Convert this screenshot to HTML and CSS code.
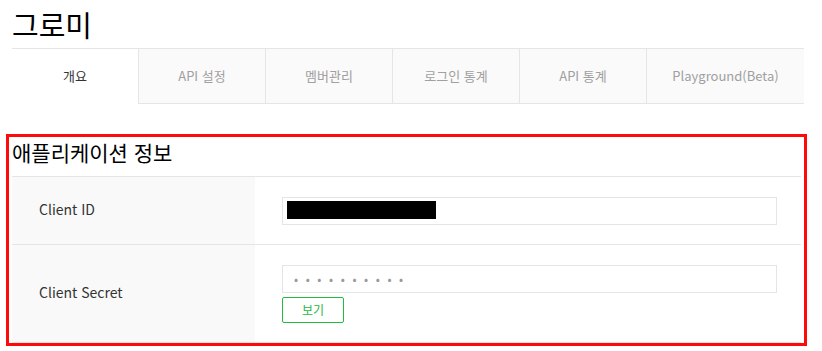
FILE: index.html
```html
<!DOCTYPE html>
<html lang="ko">
<head>
  <meta charset="UTF-8" />
  <meta name="viewport" content="width=device-width, initial-scale=1.0" />
  <title>그로미 - 개요</title>
  <link rel="stylesheet" href="styles.css">
</head>
<body>

  <div class="page">
    <h1 class="app-title">그로미</h1>

    <ul class="tabs">
      <li class="tab active">개요</li>
      <li class="tab">API 설정</li>
      <li class="tab">멤버관리</li>
      <li class="tab">로그인 통계</li>
      <li class="tab">API 통계</li>
      <li class="tab last">Playground(Beta)</li>
    </ul>
  </div>

  <div class="section">
    <h2 class="section-title">애플리케이션 정보</h2>
    <table class="info">
      <tr class="row-id">
        <th>Client ID</th>
        <td>
          <div class="field"><span class="masked"></span></div>
        </td>
      </tr>
      <tr class="row-secret">
        <th>Client Secret</th>
        <td>
          <div class="field"><span class="dots">••••••••••</span></div>
          <button class="btn-show" type="button">보기</button>
        </td>
      </tr>
    </table>
  </div>

</body>
</html>
```

FILE: styles.css
```css
body {
  margin: 0;
  background-color: #fff;
  color: #333;
  font-family: "Noto Sans CJK KR", "Noto Sans", sans-serif;
}
.page {
  width: 792px;
  margin-left: 12px;
}
.app-title {
  margin: 0;
  padding-top: 4px;
  height: 44px;
  line-height: 40px;
  font-size: 29px;
  font-weight: normal;
  color: #000;
}
.tabs {
  display: flex;
  list-style: none;
  margin: 0;
  padding: 0;
  border-top: 1px solid #e5e5e5;
}
.tab {
  width: 127px;
  height: 55px;
  line-height: 54px;
  text-align: center;
  font-size: 13px;
  color: #a0a0a0;
  background-color: #fafafa;
  border-left: 1px solid #e5e5e5;
  border-bottom: 1px solid #e5e5e5;
  box-sizing: border-box;
}
.tab.active {
  width: 126px;
  color: #333;
  background-color: #fff;
  border-left: none;
  border-bottom-color: #fff;
}
.tab.last {
  flex: 1;
}
.section {
  width: 792px;
  margin: 30px 0 0 6px;
  padding-left: 3px;
  border: 3px solid #ff0a0a;
}
.section-title {
  margin: 0;
  padding: 1px 0 10px;
  line-height: 28px;
  font-size: 21px;
  font-weight: normal;
  color: #000;
}
.info {
  width: 789px;
  border-collapse: collapse;
  border-top: 1px solid #e5e5e5;
}
.info th,
.info td {
  border-bottom: 1px solid #e5e5e5;
  vertical-align: middle;
  padding: 0;
}
.info th {
  width: 216px;
  padding: 0 0 3px 27px;
  text-align: left;
  font-size: 14px;
  font-weight: normal;
  color: #333;
  background-color: #f9f9f9;
}
.info td {
  padding: 0 24px 0 27px;
}
.row-id th {
  height: 64px;
}
.row-id td {
  height: 67px;
}
.row-secret th {
  height: 94px;
}
.row-secret td {
  height: 97px;
}
.field {
  height: 28px;
  border: 1px solid #e5e5e5;
  box-sizing: border-box;
  padding: 3px 4px;
}
.masked {
  display: block;
  width: 149px;
  height: 18px;
  background-color: #000;
}
.dots {
  display: block;
  padding-left: 7px;
  line-height: 20px;
  font-size: 12px;
  letter-spacing: 7.6px;
  color: #999;
}
.btn-show {
  display: block;
  margin-top: 4px;
  width: 62px;
  height: 26px;
  padding: 0;
  border: 1px solid #22bb3f;
  border-radius: 2px;
  background-color: #fff;
  color: #22bb3f;
  font-family: inherit;
  font-size: 12px;
}
```
